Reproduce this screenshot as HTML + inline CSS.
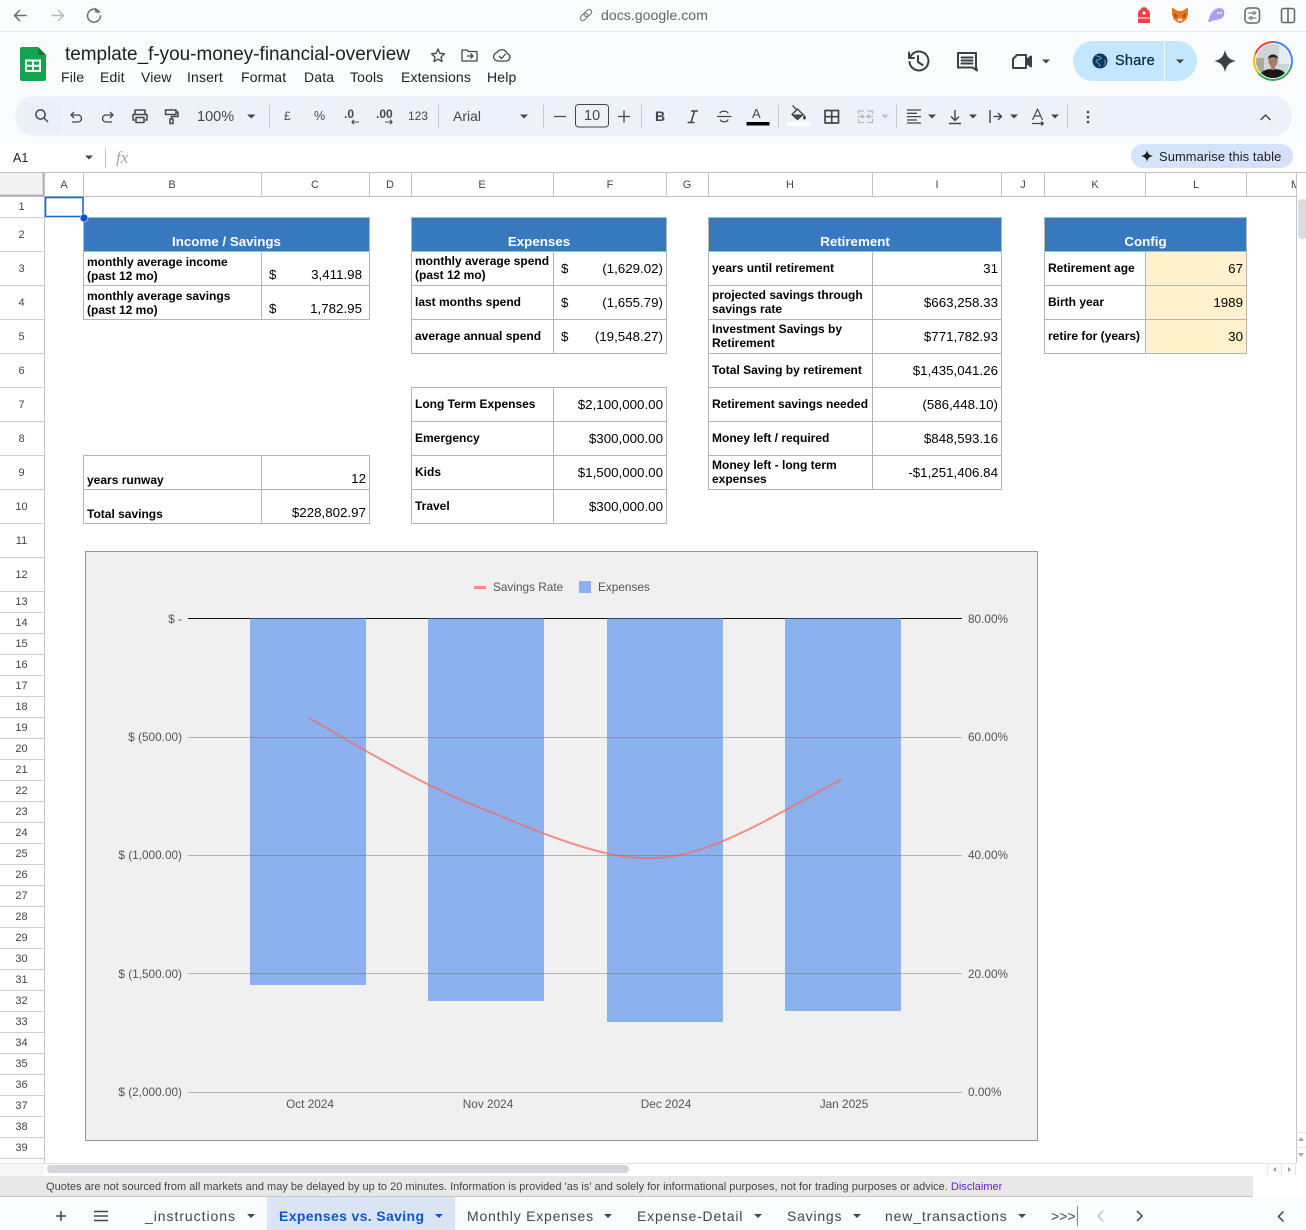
<!DOCTYPE html>
<html><head><meta charset="utf-8"><title>template_f-you-money-financial-overview</title>
<style>
html,body{margin:0;padding:0;width:1306px;height:1230px;overflow:hidden;background:#fff}
body{position:relative;font-family:"Liberation Sans",Arial,sans-serif;color:#000}
span,div.a{position:absolute;white-space:nowrap}
.l{font-weight:700;font-size:12px;line-height:14px;color:#000}
.n{font-size:13.33px;line-height:16px;color:#000}
.h{font-weight:700;font-size:13.33px;line-height:16px;color:#fff;text-align:center;top:234px}
.ch{font-size:11px;line-height:14px;color:#444;top:178px;width:40px;text-align:center}
.rh{font-size:11px;line-height:14px;color:#444;left:0;width:43px;text-align:center;margin-top:1px}
.m{font-size:14px;line-height:18px;color:#1f1f1f;top:68px;letter-spacing:.15px}
.tb{font-size:14px;line-height:18px;color:#444746;top:107px}
.tab{font-size:14px;line-height:18px;color:#444746;top:1207px;letter-spacing:.78px}
.ax{font-size:11.8px;line-height:14px;color:#555}
svg{position:absolute;left:0;top:0}
</style></head><body>
<div class="a" style="left:0;top:0;width:1306px;height:144px;background:#f9fbfd"></div>
<div class="a" style="left:0;top:31px;width:1306px;height:1px;background:#e6e8ec"></div>
<div class="a" style="left:15px;top:96px;width:1277px;height:40px;border-radius:20px;background:#edf2fa"></div>
<div class="a" style="left:24px;top:102px;width:37px;height:30px;background:#e9f0fa"></div>
<div class="a" style="left:0;top:172px;width:44px;height:24px;background:#f3f3f3"></div>
<div class="a" style="left:1131px;top:144px;width:162px;height:24px;border-radius:12px;background:linear-gradient(90deg,#d3e6fb,#d6e0fb)"></div>
<div class="a" style="left:1073px;top:41px;width:124px;height:40px;border-radius:20px;background:#c2e7ff"></div>
<div class="a" style="left:1164px;top:41px;width:1px;height:40px;background:#f4fbff"></div>
<div class="a" style="left:1146px;top:252px;width:100px;height:101px;background:#fff2cc"></div>
<div class="a" style="left:84px;top:218px;width:285px;height:33px;background:#3679bf"></div>
<div class="a" style="left:412px;top:218px;width:254px;height:33px;background:#3679bf"></div>
<div class="a" style="left:709px;top:218px;width:292px;height:33px;background:#3679bf"></div>
<div class="a" style="left:1045px;top:218px;width:201px;height:33px;background:#3679bf"></div>
<div class="a" style="left:85px;top:551px;width:951px;height:588px;background:#f0f0f0;border:1px solid #969696"></div>
<div class="a" style="left:0;top:1164px;width:44px;height:12px;background:#f7f7f7"></div>
<div class="a" style="left:0;top:1176px;width:1253px;height:20px;background:#e8e8e8;border-bottom:1px solid #c8c8c8"></div>
<div class="a" style="left:0;top:1197px;width:1306px;height:33px;background:#f9fbfd"></div>
<div class="a" style="left:267px;top:1197px;width:188px;height:33px;background:#dae4f5"></div>

<svg width="1306" height="1230" viewBox="0 0 1306 1230" fill="none">
<defs><clipPath id="bars"><rect x="250" y="619" width="116" height="366"/><rect x="428" y="619" width="116" height="382"/><rect x="607" y="619" width="116" height="403"/><rect x="785" y="619" width="116" height="392"/></clipPath></defs>
<!-- header lines -->
<path d="M0 172.5H1306M0 196.5H1296" stroke="#c0c0c0"/>
<path d="M44.5 172V1163M83.5 172V196M261.5 172V196M369.5 172V196M411.5 172V196M553.5 172V196M666.5 172V196M708.5 172V196M872.5 172V196M1001.5 172V196M1044.5 172V196M1145.5 172V196M1246.5 172V196M1296.5 172V1163" stroke="#c4c4c4"/>
<path d="M43.5 172V196M0 195.5H44" stroke="#b4b4b4" stroke-width="2"/>
<path d="M0 217.5H44M0 251.5H44M0 285.5H44M0 319.5H44M0 353.5H44M0 387.5H44M0 421.5H44M0 455.5H44M0 489.5H44M0 523.5H44M0 557.5H44M0 591.5H44M0 612.5H44M0 633.5H44M0 654.5H44M0 675.5H44M0 696.5H44M0 717.5H44M0 738.5H44M0 759.5H44M0 780.5H44M0 801.5H44M0 822.5H44M0 843.5H44M0 864.5H44M0 885.5H44M0 906.5H44M0 927.5H44M0 948.5H44M0 969.5H44M0 990.5H44M0 1011.5H44M0 1032.5H44M0 1053.5H44M0 1074.5H44M0 1095.5H44M0 1116.5H44M0 1137.5H44M0 1158.5H44" stroke="#cfcfcf"/>
<path d="M0 1163.5H1296" stroke="#e3e3e3"/>
<!-- table borders -->
<path d="M83.5 217.5H369.5V319.5H83.5ZM83.5 251.5H369.5M83.5 285.5H369.5M261.5 251.5V319.5M83.5 455.5H369.5V523.5H83.5ZM83.5 489.5H369.5M261.5 455.5V523.5
M411.5 217.5H666.5V353.5H411.5ZM411.5 251.5H666.5M411.5 285.5H666.5M411.5 319.5H666.5M553.5 251.5V353.5M411.5 387.5H666.5V523.5H411.5ZM411.5 421.5H666.5M411.5 455.5H666.5M411.5 489.5H666.5M553.5 387.5V523.5
M708.5 217.5H1001.5V489.5H708.5ZM708.5 251.5H1001.5M708.5 285.5H1001.5M708.5 319.5H1001.5M708.5 353.5H1001.5M708.5 387.5H1001.5M708.5 421.5H1001.5M708.5 455.5H1001.5M872.5 251.5V489.5
M1044.5 217.5H1246.5V353.5H1044.5ZM1044.5 251.5H1246.5M1044.5 285.5H1246.5M1044.5 319.5H1246.5M1145.5 251.5V353.5" stroke="#b4b4b4"/>
<!-- selection -->
<rect x="45.5" y="197.5" width="37.5" height="19" stroke="#1a66d8" stroke-width="1.6"/>
<circle cx="84" cy="218" r="4" fill="#0b57d0" stroke="#fff" stroke-width=".6"/>
<!-- scrollbars -->
<rect x="1298" y="199" width="9" height="40" rx="4" fill="#dadce0"/>
<rect x="47" y="1165" width="582" height="8" rx="4" fill="#d3d5da"/>
<path d="M1267.5 1164V1175M1281.5 1164V1175M1295.5 1164V1175M1296 1132.5H1306M1296 1147.5H1306" stroke="#e3e3e3"/>
<path d="M1276 1167V1172L1273 1169.5Z" fill="#999"/><path d="M1288 1167V1172L1291 1169.5Z" fill="#999"/>
<path d="M1301 1137L1304 1141H1298ZM1298 1153H1304L1301 1157Z" fill="#aaa"/>
<!-- chart -->
<path d="M309 718C330 730 350 742 366 751C400 770 435 790 488 811C530 828 575 848 620 856C640 859 660 859 680 855C730 844 785 810 842 779" stroke="#ef8d88" stroke-width="2"/>
<g fill="#8bb2ef"><rect x="250" y="619" width="116" height="366"/><rect x="428" y="619" width="116" height="382"/><rect x="607" y="619" width="116" height="403"/><rect x="785" y="619" width="116" height="392"/></g>
<g clip-path="url(#bars)"><path d="M309 718C330 730 350 742 366 751C400 770 435 790 488 811C530 828 575 848 620 856C640 859 660 859 680 855C730 844 785 810 842 779" stroke="#d67f8b" stroke-width="2"/></g>
<path d="M188 737.5H962M188 855.5H962M188 973.5H962M188 1092.5H962" stroke="#777" stroke-opacity=".5"/>
<path d="M188 618.5H962" stroke="#111"/>
<path d="M250 618.5H366M428 618.5H544M607 618.5H723M785 618.5H901" stroke="#2a4a85"/>
<rect x="474" y="586" width="12" height="3" fill="#ef8d88"/>
<rect x="579" y="581" width="12" height="12" fill="#8bb2ef"/>
<!-- browser icons -->
<g stroke="#6a6d72" stroke-width="1.5" stroke-linecap="round" stroke-linejoin="round">
<path d="M26 15.5H14.5M19.5 10.5L14.5 15.5L19.5 20.5"/>
<path d="M52 15.5H63.5M58.5 10.5L63.5 15.5L58.5 20.5" stroke="#b7babf"/>
<path d="M99 11.5A6.5 6.5 0 1 0 100.5 16M95.5 8.5L96 12H99.5"/>
<g transform="rotate(45 586 15)" stroke="#777" stroke-width="1.1"><rect x="583.5" y="8" width="5" height="8.5" rx="2.5"/><rect x="583.5" y="13.5" width="5" height="8.5" rx="2.5"/></g>
<rect x="1245" y="8" width="14.5" height="15" rx="3.5" stroke="#666"/>
<path d="M1248.5 13H1256M1248.5 18H1256" stroke="#666" stroke-width="1"/>
<circle cx="1254" cy="13" r="1.2" fill="#f9fbfd" stroke="#666" stroke-width="1"/><circle cx="1251" cy="18" r="1.2" fill="#f9fbfd" stroke="#666" stroke-width="1"/>
<rect x="1281.5" y="8.5" width="13" height="14" rx="2" stroke="#666"/>
<path d="M1288 8.5V22.5" stroke="#666"/>
</g>
<path d="M1141.5 8C1141.5 7 1146.5 7 1146.5 8L1148 10C1150 11 1150 13 1150 15V23H1138V15C1138 13 1138 11 1140 10Z" fill="#ec4444"/>
<path d="M1138 18H1150" stroke="#fff" stroke-width="1"/><circle cx="1144" cy="13" r="1.5" fill="#fff"/>
<path d="M1172 7.5L1178 11H1182L1188 7.5L1188 14L1186.5 19L1182 23H1178L1173.5 19L1172 14Z" fill="#e8781e"/>
<path d="M1174 13L1178 15.5L1177 18L1174 17ZM1186 13L1182 15.5L1183 18L1186 17Z" fill="#b9510f"/><path d="M1177.5 19L1180 18L1182.5 19L1181.5 23H1178.5Z" fill="#e9d6c8"/><path d="M1178.5 21.5H1181.5L1180 23Z" fill="#35312d"/>
<path d="M1208 22C1210 15 1212 9 1219 8C1224 8 1225 11 1224 15C1223 19 1218 20 1215 20C1213 21 1210 22 1208 22Z" fill="#ab9ff2"/>
<circle cx="1218" cy="13" r="1" fill="#fff"/><circle cx="1221" cy="13" r="1" fill="#fff"/>
<!-- sheets logo -->
<path d="M22 47H38L46 55V79A2 2 0 0 1 44 81H22A2 2 0 0 1 20 79V49A2 2 0 0 1 22 47Z" fill="#12a44f"/>
<path d="M38 47L46 55H38Z" fill="#0a7a39"/>
<path d="M26 60.5H40V71H26ZM33 60.5V71M26 65.7H40" stroke="#fff" stroke-width="2"/>
<!-- title icons -->
<g stroke="#444746" stroke-width="1.3" stroke-linejoin="round">
<path d="M438 49L439.9 53.3L444.5 53.8L441 57L442 61.5L438 59.2L434 61.5L435 57L431.5 53.8L436.1 53.3Z"/>
<path d="M462 50H467L468.5 51.5H477V61H462ZM467 56H473M470.5 53.5L473 56L470.5 58.5"/>
<path d="M498 61H506A3.8 3.8 0 0 0 507 53.5A5.5 5.5 0 0 0 497 52.5A4.3 4.3 0 0 0 498 61ZM499 56L501.5 58.5L505.5 54"/>
</g>
<!-- toolbar icons -->
<g stroke="#444746" stroke-width="1.5" stroke-linejoin="round">
<circle cx="40.5" cy="114.5" r="4.6"/><path d="M44 118L48 122"/>
<path d="M72 122H78A3.5 3.5 0 0 0 78 115H71M74 112L71 115L74 118" stroke-width="1.3"/>
<path d="M112 122H106A3.5 3.5 0 0 1 106 115H113M110 112L113 115L110 118" stroke-width="1.3"/>
<path d="M135 114V110H145V114M135 120H133V114.5H147V120H145M136 117.5H144V122.5H136Z"/>
<path d="M165.5 110H176V114.5H165.5ZM176 112H178V116.5H171.5V119M170 119H173V123.5H170Z"/>
<path d="M554 116.5H566M618 116.5H630M624 110.5V122.5" stroke-width="1.3"/>
<rect x="575.5" y="104.5" width="33" height="22.5" rx="3" stroke-width="1"/>
<path d="M359 122H352M354 119.8L351.8 122L354 124.2M385 122H392M390 119.8L392.2 122L390 124.2" stroke-width="1.1"/>
<path d="M717 116.5H731.5M720 113.5C720 110.5 728 110.5 728 113.5M720.5 119.5C721 122.5 727.5 122.5 728 119.5" stroke-width="1.3"/>
<path d="M825 110.5H838.5V123H825ZM831.7 110.5V123M825 116.7H838.5" stroke-width="1.7"/>
<path d="M797.5 109L803 114.5L797.5 119.5L792 114.5ZM792.5 105.5L797 110" stroke-width="1.4"/>
<path d="M907 110H921M907 113.3H917M907 116.6H921M907 120H917M907 123H921" stroke-width="1.3"/>
<path d="M955 110V120M951 116.5L955 120.5L959 116.5M949 123.5H961" stroke-width="1.4"/>
<path d="M990 110V123M993.5 116.5H1001M998 113L1001.5 116.5L998 120" stroke-width="1.4"/>
<path d="M1032.5 120L1037.5 109L1042.5 120M1034.5 116H1040.5M1032 123.5H1043M1041 121.5L1043.5 123.5L1041 125.5" stroke-width="1.2"/>
<path d="M1261 119.5L1265.5 115L1270 119.5" stroke-width="1.5" stroke-linecap="round"/>
</g>
<path d="M691 111H698M694.5 111L691 122.5M687.5 122.5H694.5" stroke="#444746" stroke-width="1.5"/>
<path d="M864 111H858.5V114M858.5 119V122.5H864M867 111H872.5V114M872.5 119V122.5H867M858 116.5H864M861.5 114.5L864 116.5L861.5 118.5M873 116.5H867M869.5 114.5L867 116.5L869.5 118.5" stroke="#b5b8bd" stroke-width="1.3"/>
<path d="M792 114.5H803L797.5 119.5Z" fill="#444746"/><path d="M804 114C805.5 116.5 806 117 806 118A1.5 1.5 0 0 1 803 118C803 117 803.5 116 804 114Z" fill="#444746"/>
<rect x="746.5" y="122" width="23" height="3.5" fill="#000"/>
<rect x="787" y="122" width="23" height="4" fill="#fff"/>
<g fill="#444746"><circle cx="1088" cy="112" r="1.3"/><circle cx="1088" cy="117" r="1.3"/><circle cx="1088" cy="122" r="1.3"/></g>
<path d="M269.5 105V128M438.5 105V128M543.5 105V128M641.5 105V128M778.5 105V128M896.5 105V128M1067.5 105V128" stroke="#c7c9cd"/>
<g fill="#444746"><path d="M247 114.5H255.5L251.2 118.5ZM520 114.5H528L524 118.5ZM928 114.5H936L932 118.5ZM969 114.5H977L973 118.5ZM1010 114.5H1018L1014 118.5ZM1051 114.5H1059L1055 118.5Z"/>
<path d="M881 114.5H889L885 118.5Z" fill="#c2c4c8"/><path d="M85 155.5H93L89 159.5Z"/>
<path d="M1042 59.5H1050L1046 63.5ZM1176 59.5H1184L1180 63.5Z"/>
<path d="M247 1214H255L251 1218ZM604 1214H612L608 1218ZM754 1214H762L758 1218ZM853 1214H861L857 1218ZM1018 1214H1026L1022 1218Z"/></g>
<path d="M435 1214H443L439 1218Z" fill="#0b57d0"/>
<!-- formula bar -->
<path d="M105.5 148V168" stroke="#c8c8c8"/>
<!-- right header -->
<g stroke="#3c4043" stroke-width="2" stroke-linejoin="round" stroke-linecap="round">
<path d="M909.5 62A9.5 9.5 0 1 0 912 54.5L909 58M909 52.5V58H914M918 56V62L922.5 65"/>
<path d="M958 53H976V67.5L977 70.5L972.5 67.5H958ZM961.5 57.5H972.5M961.5 60.5H972.5M961.5 63.5H972.5"/>
<path d="M1017 55H1026V68H1013V59Z"/>
<path d="M1026.5 60L1031 56.5V66.5L1026.5 63Z" fill="#3c4043"/>
</g>
<circle cx="1100" cy="61" r="7.5" fill="#0b3a60"/>
<path d="M1096 55.5C1098 57 1100 56 1101 58C1101 60 1097 59 1096 61C1097 64 1100 63 1100 67M1104 60C1106 61 1106 63 1104 65" stroke="#6f9dbd" stroke-width="1"/>
<path d="M1225 50C1226.5 56.5 1229 59.5 1236 61C1229 62.5 1226.5 65.5 1225 72C1223.5 65.5 1221 62.5 1214 61C1221 59.5 1223.5 56.5 1225 50Z" fill="#3c4043"/>
<path d="M1147 150C1147.6 153.5 1149 155 1153 156C1149 157 1147.6 158.5 1147 162C1146.4 158.5 1145 157 1141 156C1145 155 1146.4 153.5 1147 150Z" fill="#1f1f1f"/>
<!-- tab bar icons -->
<path d="M56 1216H66M61 1211V1221M94 1211.5H108M94 1216H108M94 1220.5H108" stroke="#444746" stroke-width="1.5"/>
<path d="M1103 1211L1098 1216L1103 1221" stroke="#c0c2c6" stroke-width="1.5"/>
<path d="M1137 1211L1142 1216L1137 1221" stroke="#444746" stroke-width="1.5"/>
<path d="M1283.5 1211.5L1278.5 1216.5L1283.5 1221.5" stroke="#444746" stroke-width="1.5"/>
<path d="M1077.5 1206V1226" stroke="#8a8a8a"/>
</svg>

<!-- avatar -->
<div class="a" style="left:1253px;top:41px;width:40px;height:40px;border-radius:50%;background:conic-gradient(#4285f4 3% 30%,#34a853 32% 63%,#fbbc04 65% 80%,#ea4335 82% 100%)"></div>
<div class="a" style="left:1255px;top:43px;width:36px;height:36px;border-radius:50%;background:#fff"></div>
<svg style="left:1256px;top:44px" width="34" height="34" viewBox="0 0 34 34"><defs><clipPath id="av"><circle cx="17" cy="17" r="17"/></clipPath></defs><g clip-path="url(#av)"><rect width="34" height="34" fill="#cfd4d6"/><rect x="23" width="11" height="20" fill="#e3edf4"/><path d="M0 14H8V34H0Z" fill="#aca79d"/><path d="M3 34C4 27 10 25 17 25C24 25 30 27 31 34Z" fill="#17181a"/><ellipse cx="17" cy="17" rx="4.5" ry="6" fill="#a87b60"/><path d="M12 15C12 9 22 9 22 15C20 12.5 14 12.5 12 15Z" fill="#22201e"/><rect x="15" y="21" width="4" height="5" fill="#a87b60"/></g></svg>

<!-- browser bar -->
<span style="left:601px;top:7px;font-size:14.15px;line-height:17px;color:#62666b">docs.google.com</span>
<span style="left:65px;top:44px;font-size:18.93px;line-height:22px;color:#1f1f1f">template_f-you-money-financial-overview</span>
<span class="m" style="left:61px">File</span><span class="m" style="left:100px">Edit</span><span class="m" style="left:141px">View</span><span class="m" style="left:187px">Insert</span><span class="m" style="left:241px">Format</span><span class="m" style="left:304px">Data</span><span class="m" style="left:350px">Tools</span><span class="m" style="left:401px">Extensions</span><span class="m" style="left:487px">Help</span>
<span style="left:1115px;top:52px;font-size:14.5px;line-height:18px;color:#0b2a45;letter-spacing:.25px;-webkit-text-stroke:.25px #0b2a45">Share</span>

<!-- toolbar -->
<span class="tb" style="left:197px;top:108px;font-size:14.5px">100%</span>
<span class="tb" style="left:284px;top:107px;font-size:12px">£</span>
<span class="tb" style="left:314px;top:107px;font-size:12.5px">%</span>
<span class="tb" style="left:344px;top:105px;font-size:12px;font-weight:700">.0</span>
<span class="tb" style="left:376px;top:105px;font-size:12px;font-weight:700">.00</span>
<span class="tb" style="left:408px;top:107px;font-size:12px">123</span>
<span class="tb" style="left:453px;font-size:14px">Arial</span>
<span class="tb" style="left:584px;top:107px;font-size:14.5px">10</span>
<span class="tb" style="left:655px;top:107px;font-size:14px;font-weight:700">B</span>
<span class="tb" style="left:752px;top:105px;font-size:13px">A</span>

<!-- formula -->
<span style="left:13px;top:151px;font-size:12.5px;line-height:15px;color:#1f1f1f">A1</span>
<span style="left:116px;top:149px;font-family:'Liberation Serif',serif;font-style:italic;font-size:17px;line-height:18px;color:#a0a2a4">fx</span>
<span style="left:1159px;top:149px;font-size:12.9px;line-height:15px;color:#1f1f1f;letter-spacing:.1px">Summarise this table</span>

<!-- column headers -->
<span class="ch" style="left:44px">A</span><span class="ch" style="left:152px">B</span><span class="ch" style="left:295px">C</span><span class="ch" style="left:370px">D</span><span class="ch" style="left:462px">E</span><span class="ch" style="left:590px">F</span><span class="ch" style="left:667px">G</span><span class="ch" style="left:770px">H</span><span class="ch" style="left:917px">I</span><span class="ch" style="left:1003px">J</span><span class="ch" style="left:1075px">K</span><span class="ch" style="left:1176px">L</span><span class="ch" style="left:1291px;width:5px;overflow:hidden;text-align:left">M</span>

<!-- row headers -->
<span class="rh" style="top:199px">1</span><span class="rh" style="top:227px">2</span><span class="rh" style="top:261px">3</span><span class="rh" style="top:295px">4</span><span class="rh" style="top:329px">5</span><span class="rh" style="top:363px">6</span><span class="rh" style="top:397px">7</span><span class="rh" style="top:431px">8</span><span class="rh" style="top:465px">9</span><span class="rh" style="top:499px">10</span><span class="rh" style="top:533px">11</span><span class="rh" style="top:567px">12</span><span class="rh" style="top:594px">13</span><span class="rh" style="top:615px">14</span><span class="rh" style="top:636px">15</span><span class="rh" style="top:657px">16</span><span class="rh" style="top:678px">17</span><span class="rh" style="top:699px">18</span><span class="rh" style="top:720px">19</span><span class="rh" style="top:741px">20</span><span class="rh" style="top:762px">21</span><span class="rh" style="top:783px">22</span><span class="rh" style="top:804px">23</span><span class="rh" style="top:825px">24</span><span class="rh" style="top:846px">25</span><span class="rh" style="top:867px">26</span><span class="rh" style="top:888px">27</span><span class="rh" style="top:909px">28</span><span class="rh" style="top:930px">29</span><span class="rh" style="top:951px">30</span><span class="rh" style="top:972px">31</span><span class="rh" style="top:993px">32</span><span class="rh" style="top:1014px">33</span><span class="rh" style="top:1035px">34</span><span class="rh" style="top:1056px">35</span><span class="rh" style="top:1077px">36</span><span class="rh" style="top:1098px">37</span><span class="rh" style="top:1119px">38</span><span class="rh" style="top:1140px">39</span>

<!-- table headers -->
<span class="h" style="left:84px;width:285px">Income / Savings</span>
<span class="h" style="left:412px;width:254px">Expenses</span>
<span class="h" style="left:709px;width:292px">Retirement</span>
<span class="h" style="left:1045px;width:201px">Config</span>

<!-- income -->
<span class="l" style="left:87px;top:255px">monthly average income</span><span class="l" style="left:87px;top:269px">(past 12 mo)</span>
<span class="n" style="left:269px;top:267px">$</span><span class="n" style="right:944px;top:267px">3,411.98</span>
<span class="l" style="left:87px;top:289px">monthly average savings</span><span class="l" style="left:87px;top:303px">(past 12 mo)</span>
<span class="n" style="left:269px;top:301px">$</span><span class="n" style="right:944px;top:301px">1,782.95</span>
<span class="l" style="left:87px;top:473px">years runway</span><span class="n" style="right:940px;top:471px">12</span>
<span class="l" style="left:87px;top:507px">Total savings</span><span class="n" style="right:940px;top:505px">$228,802.97</span>

<!-- expenses -->
<span class="l" style="left:415px;top:254px">monthly average spend</span><span class="l" style="left:415px;top:268px">(past 12 mo)</span>
<span class="n" style="left:561px;top:261px">$</span><span class="n" style="right:643px;top:261px">(1,629.02)</span>
<span class="l" style="left:415px;top:295px">last months spend</span><span class="n" style="left:561px;top:295px">$</span><span class="n" style="right:643px;top:295px">(1,655.79)</span>
<span class="l" style="left:415px;top:329px">average annual spend</span><span class="n" style="left:561px;top:329px">$</span><span class="n" style="right:643px;top:329px">(19,548.27)</span>
<span class="l" style="left:415px;top:397px">Long Term Expenses</span><span class="n" style="right:643px;top:397px">$2,100,000.00</span>
<span class="l" style="left:415px;top:431px">Emergency</span><span class="n" style="right:643px;top:431px">$300,000.00</span>
<span class="l" style="left:415px;top:465px">Kids</span><span class="n" style="right:643px;top:465px">$1,500,000.00</span>
<span class="l" style="left:415px;top:499px">Travel</span><span class="n" style="right:643px;top:499px">$300,000.00</span>

<!-- retirement -->
<span class="l" style="left:712px;top:261px">years until retirement</span><span class="n" style="right:308px;top:261px">31</span>
<span class="l" style="left:712px;top:288px">projected savings through</span><span class="l" style="left:712px;top:302px">savings rate</span><span class="n" style="right:308px;top:295px">$663,258.33</span>
<span class="l" style="left:712px;top:322px">Investment Savings by</span><span class="l" style="left:712px;top:336px">Retirement</span><span class="n" style="right:308px;top:329px">$771,782.93</span>
<span class="l" style="left:712px;top:363px">Total Saving by retirement</span><span class="n" style="right:308px;top:363px">$1,435,041.26</span>
<span class="l" style="left:712px;top:397px">Retirement savings needed</span><span class="n" style="right:308px;top:397px">(586,448.10)</span>
<span class="l" style="left:712px;top:431px">Money left / required</span><span class="n" style="right:308px;top:431px">$848,593.16</span>
<span class="l" style="left:712px;top:458px">Money left - long term</span><span class="l" style="left:712px;top:472px">expenses</span><span class="n" style="right:308px;top:465px">-$1,251,406.84</span>

<!-- config -->
<span class="l" style="left:1048px;top:261px">Retirement age</span><span class="n" style="right:63px;top:261px">67</span>
<span class="l" style="left:1048px;top:295px">Birth year</span><span class="n" style="right:63px;top:295px">1989</span>
<span class="l" style="left:1048px;top:329px">retire for (years)</span><span class="n" style="right:63px;top:329px">30</span>

<!-- chart text -->
<span class="ax" style="left:493px;top:580px">Savings Rate</span><span class="ax" style="left:598px;top:580px">Expenses</span>
<span class="ax" style="right:1124px;top:612px">$ -</span><span class="ax" style="right:1124px;top:730px">$ (500.00)</span><span class="ax" style="right:1124px;top:848px">$ (1,000.00)</span><span class="ax" style="right:1124px;top:967px">$ (1,500.00)</span><span class="ax" style="right:1124px;top:1085px">$ (2,000.00)</span>
<span class="ax" style="left:968px;top:612px">80.00%</span><span class="ax" style="left:968px;top:730px">60.00%</span><span class="ax" style="left:968px;top:848px">40.00%</span><span class="ax" style="left:968px;top:967px">20.00%</span><span class="ax" style="left:968px;top:1085px">0.00%</span>
<span class="ax" style="left:260px;width:100px;text-align:center;top:1097px">Oct 2024</span><span class="ax" style="left:438px;width:100px;text-align:center;top:1097px">Nov 2024</span><span class="ax" style="left:616px;width:100px;text-align:center;top:1097px">Dec 2024</span><span class="ax" style="left:794px;width:100px;text-align:center;top:1097px">Jan 2025</span>

<!-- disclaimer -->
<span style="left:46px;top:1179px;font-size:11.02px;line-height:15px;color:#444;margin-top:1px">Quotes are not sourced from all markets and may be delayed by up to 20 minutes. Information is provided 'as is' and solely for informational purposes, not for trading purposes or advice. <b style="font-weight:400;color:#5e1fd1">Disclaimer</b></span>

<!-- tabs -->
<span class="tab" style="left:145px;letter-spacing:.95px">_instructions</span>
<span class="tab" style="left:279px;color:#0b57d0;font-weight:700;letter-spacing:.36px">Expenses vs. Saving</span>
<span class="tab" style="left:467px">Monthly Expenses</span>
<span class="tab" style="left:637px;letter-spacing:.8px">Expense-Detail</span>
<span class="tab" style="left:787px">Savings</span>
<span class="tab" style="left:885px;letter-spacing:.85px">new_transactions</span>
<span class="tab" style="left:1051px;width:26px;overflow:hidden;letter-spacing:0">&gt;&gt;&gt;:</span>
</body></html>
